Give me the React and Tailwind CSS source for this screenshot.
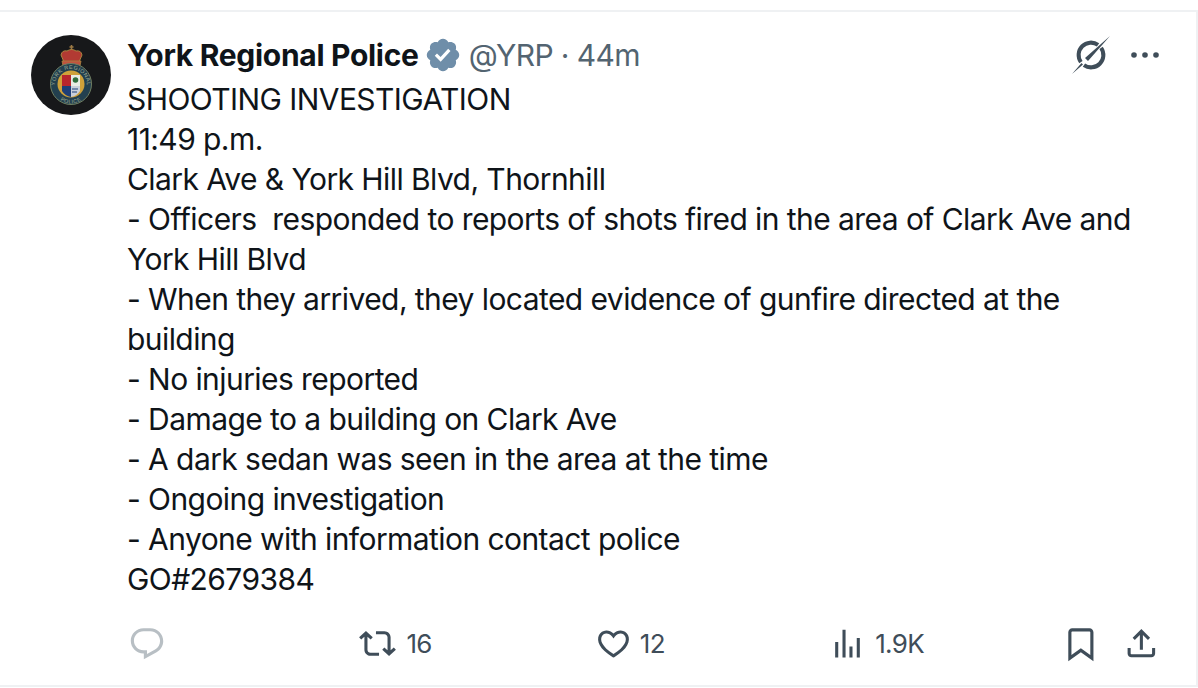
const lines = [
  "SHOOTING INVESTIGATION",
  "11:49 p.m.",
  "Clark Ave & York Hill Blvd, Thornhill",
  "- Officers  responded to reports of shots fired in the area of Clark Ave and",
  "York Hill Blvd",
  "- When they arrived, they located evidence of gunfire directed at the",
  "building",
  "- No injuries reported",
  "- Damage to a building on Clark Ave",
  "- A dark sedan was seen in the area at the time",
  "- Ongoing investigation",
  "- Anyone with information contact police",
  "GO#2679384",
];

function Icon({ d, className }) {
  return (
    <svg viewBox="0 0 24 24" fill="currentColor" className={className}>
      <path d={d} />
    </svg>
  );
}

const reply = "M1.751 10c0-4.42 3.584-8 8.005-8h4.366c4.49 0 8.129 3.64 8.129 8.13 0 2.96-1.607 5.68-4.196 7.11l-8.054 4.46v-3.69h-.067c-4.49.1-8.183-3.51-8.183-8.01zm8.005-6c-3.317 0-6.005 2.69-6.005 6 0 3.37 2.77 6.08 6.138 6.01l.351-.01h1.761v2.3l5.087-2.81c1.951-1.08 3.163-3.13 3.163-5.36 0-3.39-2.744-6.13-6.129-6.13H9.756z";
const retweet = "M4.5 3.88l4.432 4.14-1.364 1.46L5.5 7.55V16c0 1.1.896 2 2 2H13v2H7.5c-2.209 0-4-1.79-4-4V7.55L1.432 9.48.068 8.02 4.5 3.88zM16.5 6H11V4h5.5c2.209 0 4 1.79 4 4v8.45l2.068-1.93 1.364 1.46-4.432 4.14-4.432-4.14 1.364-1.46 2.068 1.93V8c0-1.1-.896-2-2-2z";
const heart = "M16.697 5.5c-1.222-.06-2.679.51-3.89 2.16l-.805 1.09-.806-1.09C9.984 6.01 8.526 5.44 7.304 5.5c-1.243.07-2.349.78-2.91 1.91-.552 1.12-.633 2.78.479 4.82 1.074 1.97 3.257 4.27 7.129 6.61 3.87-2.34 6.052-4.64 7.126-6.61 1.111-2.04 1.03-3.7.477-4.82-.561-1.13-1.666-1.84-2.908-1.91zm4.187 7.69c-1.351 2.48-4.001 5.12-8.379 7.67l-.503.3-.504-.3c-4.379-2.55-7.029-5.19-8.382-7.67-1.36-2.5-1.41-4.86-.514-6.67.887-1.79 2.647-2.91 4.601-3.01 1.651-.09 3.368.56 4.798 2.01 1.429-1.45 3.146-2.1 4.796-2.01 1.954.1 3.714 1.22 4.601 3.01.896 1.81.846 4.17-.514 6.67z";
const views = "M8.75 21V3h2v18h-2zM18 21V8.5h2V21h-2zM4 21l.004-10h2L6 21H4zm9.248 0v-7h2v7h-2z";
const bookmark = "M4 4.5C4 3.12 5.119 2 6.5 2h11C18.881 2 20 3.12 20 4.5v18.44l-8-5.71-8 5.71V4.5zM6.5 4c-.276 0-.5.22-.5.5v14.56l6-4.29 6 4.29V4.5c0-.28-.224-.5-.5-.5h-11z";
const share = "M12 2.59l5.7 5.7-1.41 1.42L13 6.41V16h-2V6.41l-3.3 3.3-1.41-1.42L12 2.59zM21 15l-.02 3.51c0 1.38-1.12 2.49-2.5 2.49H5.5C4.11 21 3 19.88 3 18.5V15h2v3.5c0 .28.22.5.5.5h12.98c.28 0 .5-.22.5-.5L19 15h2z";
const verified = "M22.25 12c0-1.43-.88-2.67-2.19-3.34.46-1.39.2-2.9-.81-3.91s-2.52-1.27-3.91-.81c-.66-1.31-1.91-2.19-3.34-2.19s-2.67.88-3.33 2.19c-1.4-.46-2.91-.2-3.92.81s-1.26 2.52-.8 3.91c-1.31.67-2.2 1.91-2.2 3.34s.89 2.67 2.2 3.34c-.46 1.39-.21 2.9.8 3.91s2.52 1.26 3.91.81c.67 1.31 1.91 2.19 3.34 2.19s2.68-.88 3.34-2.19c1.39.45 2.9.2 3.91-.81s1.27-2.52.81-3.91c1.31-.67 2.19-1.91 2.19-3.34zm-11.71 4.2L6.8 12.46l1.41-1.42 2.26 2.26 4.8-5.23 1.47 1.36-6.2 6.77z";

function Crest() {
  return (
    <svg viewBox="0 0 80 80" className="h-20 w-20 shrink-0">
      <circle cx="40" cy="40" r="40" fill="#17181a" />
      {/* crown */}
      <path d="M40.5 10 V15 M38.5 12 H42.5" stroke="#9c7a45" strokeWidth="1.6" />
      <path d="M33 27 L30 20 Q31 15 36 16 Q38.5 14.5 40.5 14.5 Q43 14.5 45 16 Q50 15 51 20 L48 27 Z" fill="#b23a33" stroke="#a8843f" strokeWidth="1" />
      <path d="M31 26 H50 L49 31 H32 Z" fill="#c2533f" stroke="#a8843f" strokeWidth="0.8" />
      {/* ring */}
      <circle cx="40" cy="49" r="20.5" fill="#23404f" stroke="#6f7f62" strokeWidth="1" />
      <circle cx="40" cy="49" r="13.5" fill="#cfa13a" />
      {/* shield */}
      <rect x="31" y="40" width="9" height="11" fill="#b8262d" />
      <rect x="40" y="40" width="9" height="11" fill="#e9ece4" />
      <circle cx="44.5" cy="45" r="2.8" fill="#2f6e3c" />
      <path d="M31 51 H40 V62 Q34 61 31 56 Z" fill="#1d3f78" />
      <path d="M40 51 H49 V56 Q46 61 40 62 Z" fill="#c9d0da" />
      <path d="M41 54 H47 M41 57 H46" stroke="#1d3f78" strokeWidth="1.2" />
      <path id="crest-top" d="M24 50 A16 16 0 0 1 56 50" fill="none" />
      <path id="crest-bottom" d="M21.5 50 A18.5 18.5 0 0 0 58.5 50" fill="none" />
      <text fontSize="5.4" fill="#9dab92" fontFamily="Liberation Sans, sans-serif" letterSpacing="0.5">
        <textPath href="#crest-top" startOffset="50%" textAnchor="middle">YORK REGIONAL</textPath>
      </text>
      <text fontSize="5.4" fill="#9dab92" fontFamily="Liberation Sans, sans-serif" letterSpacing="0.5">
        <textPath href="#crest-bottom" startOffset="50%" textAnchor="middle">POLICE</textPath>
      </text>
    </svg>
  );
}

function GrokIcon() {
  return (
    <svg viewBox="0 0 40 40" className="h-10 w-10 text-[#3f4d59]">
      <path d="M27.05 9.9 A12.3 12.3 0 0 0 9.9 27.05" fill="none" stroke="currentColor" strokeWidth="4" />
      <path d="M30.1 12.95 A12.3 12.3 0 0 1 12.95 30.1" fill="none" stroke="currentColor" strokeWidth="4" />
      <path d="M1 39 L10.5 28 L12 29.5 Z M39 1 L14 23 L17 26 Z" fill="currentColor" />
    </svg>
  );
}

function Stat({ d, iconClass, label, labelClass, className }) {
  return (
    <div className={`flex items-center ${className}`}>
      <Icon d={d} className={iconClass} />
      {label && <span className={`text-[26px] tracking-[-0.6px] ${labelClass}`}>{label}</span>}
    </div>
  );
}

export default function App() {
  return (
    <div className="h-[688px] w-[1198px] bg-white pt-[10px] font-['Inter',sans-serif] text-[#0f1419]">
      <div className="flex h-[677px] gap-4 border-y-2 border-r-2 border-[#eff1f3] pl-[31px] pr-[36px] pt-[23px]">
        <Crest />
        <div className="min-w-0 flex-1">
          <div className="flex h-10 items-center text-[30px] leading-10">
            <span className="font-bold tracking-[-0.3px]">York Regional Police</span>
            <Icon d={verified} className="ml-[5px] h-[38px] w-[38px] text-[#6f8ea9]" />
            <span className="ml-[7px] tracking-[-0.6px] text-[#536471]">@YRP · 44m</span>
            <div className="ml-auto flex items-center gap-[19px] text-[#3f4d59]">
              <GrokIcon />
              <svg viewBox="0 0 30 8" className="h-2 w-[30px]" fill="currentColor">
                <circle cx="4" cy="4" r="2.8" />
                <circle cx="15" cy="4" r="2.8" />
                <circle cx="26" cy="4" r="2.8" />
              </svg>
            </div>
          </div>
          <div className="mt-1 whitespace-pre text-[30px] leading-10 tracking-[-0.57px]">
            {lines.map((line) => (
              <div key={line}>{line}</div>
            ))}
          </div>
          <div className="mt-[25px] flex items-center pl-px text-[#3f4d59]">
            <Stat d={reply} iconClass="h-[38px] w-[38px] text-[#b8bfc4]" className="w-[233px]" />
            <Stat d={retweet} iconClass="h-[37px] w-[37px]" label="16" labelClass="ml-[10px]" className="w-[237px]" />
            <Stat d={heart} iconClass="h-[37px] w-[37px]" label="12" labelClass="ml-2" className="w-[236px]" />
            <Stat d={views} iconClass="h-[37px] w-[37px]" label="1.9K" labelClass="ml-[9px]" className="w-[234px]" />
            <Icon d={bookmark} className="h-[38px] w-[38px]" />
            <Icon d={share} className="ml-[24px] h-[37px] w-[37px]" />
          </div>
        </div>
      </div>
    </div>
  );
}
